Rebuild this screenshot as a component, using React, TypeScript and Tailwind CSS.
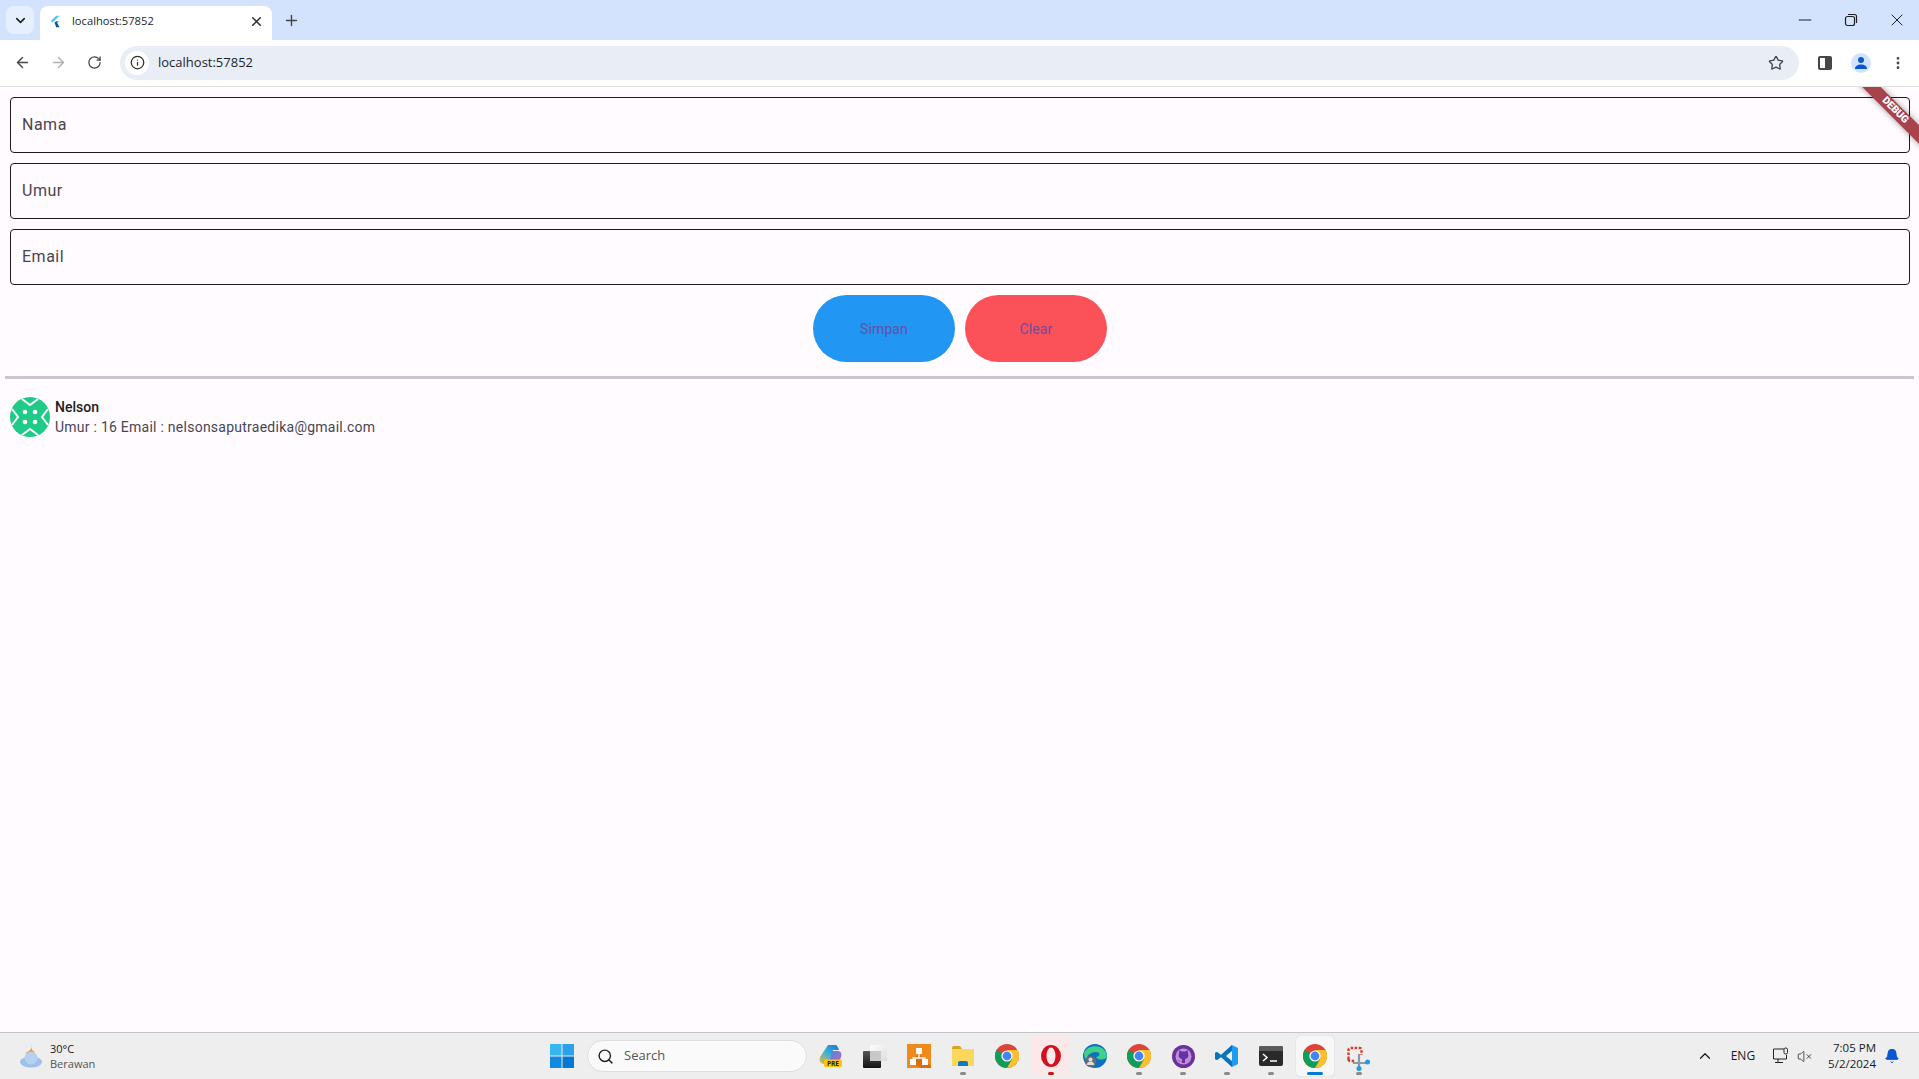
import { ArrowLeft, ArrowRight, ChevronDown, ChevronUp, Info, Minus, Plus, RotateCw, Search, Star, X, EllipsisVertical, Bell, VolumeX } from "lucide-react";

const font = "font-['Roboto',sans-serif]";
const uiFont = "font-['Open_Sans','Noto_Sans',sans-serif]";

function FlutterLogo() {
  return (
    <svg width="10" height="13" viewBox="0 0 12 14">
      <path d="M7.5 0H11.5L3 8.2 1 6.4z" fill="#47c5fb" />
      <path d="M7.5 6.4H11.5L7.5 10.4 5.5 8.4z" fill="#47c5fb" />
      <path d="M5.5 8.4 7.5 6.6 11.5 14H7.5z" fill="#00569e" />
    </svg>
  );
}

function ChromeIcon() {
  return (
    <svg width="24" height="24" viewBox="0 0 24 24">
      <circle cx="12" cy="12" r="12" fill="#db4437" />
      <path d="M12 12 1.6 6A12 12 0 0 0 12 24l5.2-9z" fill="#0f9d58" />
      <path d="M12 6h10.4A12 12 0 0 1 12 24l5.2-9z" fill="#fbc02d" />
      <circle cx="12" cy="12" r="5.6" fill="#fff" />
      <circle cx="12" cy="12" r="4.4" fill="#4285f4" />
    </svg>
  );
}

function Avatar() {
  return (
    <svg width="40" height="40" viewBox="0 0 40 40">
      <circle cx="20" cy="20" r="20" fill="#20cb88" />
      <g fill="none" stroke="#fffbff" strokeWidth="2">
        <path d="M12 2 20 8 28 2" />
        <path d="M12 38 20 32 28 38" />
        <path d="M2 12 8 20 2 28" />
        <path d="M38 12 32 20 38 28" />
      </g>
      <circle cx="15" cy="15" r="2.3" fill="#fffbff" />
      <circle cx="25" cy="15" r="2.3" fill="#fffbff" />
      <circle cx="15" cy="25" r="2.3" fill="#fffbff" />
      <circle cx="25" cy="25" r="2.3" fill="#fffbff" />
    </svg>
  );
}

function Field({ label }: { label: string }) {
  return (
    <div className="flex h-14 items-center rounded border border-[#1d1b20] pl-[11px]">
      <span className="text-base tracking-[0.5px] text-[#49454f]">{label}</span>
    </div>
  );
}

function TaskIcon({ children, dot, bg, color = "#8a8a8a", wide }: { children: React.ReactNode; dot?: boolean; bg?: string; color?: string; wide?: boolean }) {
  return (
    <div className="relative flex h-10 w-11 shrink-0 items-center justify-center">
      {bg && <span className={`absolute inset-x-[3px] inset-y-0 rounded ${bg}`} />}
      <span className="relative flex items-center justify-center">{children}</span>
      {dot && (
        <span className="absolute bottom-[1px] left-0 right-0 flex justify-center">
          <span className={`h-[3px] rounded-full ${wide ? "w-4" : "w-1.5"}`} style={{ backgroundColor: color }} />
        </span>
      )}
    </div>
  );
}

export default function App() {
  return (
    <div className={`flex h-screen w-full flex-col overflow-hidden bg-[#fffbff] ${font}`}>
      {/* Chrome tab strip */}
      <div className={`flex h-10 shrink-0 items-end bg-[#d3e3fd] ${uiFont}`}>
        <div className="mb-[6px] ml-[6px] flex h-7 w-7 items-center justify-center rounded-lg bg-[#e6effd]">
          <ChevronDown size={15} strokeWidth={2.5} className="text-[#1f1f1f]" />
        </div>
        <div className="ml-[6px] flex h-[34px] w-[232px] items-center rounded-t-lg bg-white pb-1 pl-[10px] pr-2">
          <FlutterLogo />
          <span className="ml-[12px] flex-1 text-[11.2px] text-[#1f1f1f]">localhost:57852</span>
          <X size={15} strokeWidth={2.5} className="text-[#303030]" />
        </div>
        <div className="mb-[6px] ml-[5px] flex h-7 w-7 items-center justify-center">
          <Plus size={17} strokeWidth={2} className="text-[#444746]" />
        </div>
        <div className="mb-[10px] ml-auto flex items-center gap-[26px] pr-[12px] text-[#1f1f1f]">
          <Minus size={20} strokeWidth={1.2} />
          <svg width="20" height="20" viewBox="0 0 20 20" fill="none" stroke="currentColor" strokeWidth="1.2">
            <rect x="4.5" y="6.5" width="9" height="9" rx="2" />
            <path d="M7 4.5h6.5a2 2 0 0 1 2 2V13" />
          </svg>
          <X size={20} strokeWidth={1.2} />
        </div>
      </div>

      {/* Toolbar */}
      <div className={`flex h-[47px] shrink-0 items-center rounded-t-lg border-b border-[#e3e3de] bg-white pb-[1px] ${uiFont}`}>
        <ArrowLeft size={17} strokeWidth={2} className="ml-[14px] text-[#474747]" />
        <ArrowRight size={17} strokeWidth={2} className="ml-[19px] text-[#b0b0b0]" />
        <RotateCw size={15} strokeWidth={2} className="ml-[20px] text-[#474747]" />
        <div className="ml-[18px] flex h-[34px] flex-1 items-center rounded-full bg-[#e9eef6] pl-[5px] pr-[15px]">
          <div className="flex h-6 w-6 items-center justify-center rounded-full bg-white">
            <Info size={15} strokeWidth={2} className="text-[#303030]" />
          </div>
          <span className="ml-[9px] flex-1 text-[13px] text-[#1f1f1f]">localhost:57852</span>
          <Star size={16} strokeWidth={2} className="text-[#474747]" />
        </div>
        <div className="ml-[19px] h-[14px] w-[14px] rounded-[2px] border-2 border-[#474747] bg-[linear-gradient(to_right,#fff_50%,#474747_50%)]" />
        <div className="ml-[19px] flex h-5 w-5 items-center justify-center overflow-hidden rounded-full bg-[#d3e3fd]">
          <svg width="14" height="14" viewBox="0 0 14 14" fill="#0b57d0">
            <circle cx="7" cy="4" r="3" />
            <path d="M1 13c0-3 2.5-4.5 6-4.5s6 1.5 6 4.5z" />
          </svg>
        </div>
        <EllipsisVertical size={16} strokeWidth={2.2} className="ml-[19px] mr-[13px] text-[#474747]" />
      </div>

      {/* Flutter page */}
      <main className="relative flex-1 overflow-hidden pt-[10px]">
        <div className="flex flex-col gap-[10px] pl-[10px] pr-[9px]">
          <Field label="Nama" />
          <Field label="Umur" />
          <Field label="Email" />
        </div>
        <div className="mt-[10px] flex justify-center gap-[10px] pl-[1px]">
          <button className="h-[67px] w-[142px] rounded-full bg-[#2196f3] text-sm tracking-[0.1px] text-[#6750a4]">Simpan</button>
          <button className="h-[67px] w-[142px] rounded-full bg-[#fa5258] text-sm tracking-[0.1px] text-[#6750a4]">Clear</button>
        </div>
        <div className="mx-[5px] mt-[14px] h-[3px] bg-[#cac4d0]" />
        <div className="mt-[18px] flex items-center gap-[5px] pl-[10px]">
          <Avatar />
          <div className="flex flex-col">
            <span className="text-sm font-medium leading-5 text-[#1d1b20]">Nelson</span>
            <span className="text-sm leading-5 tracking-[0.25px] text-[#49454f]">Umur : 16 Email : nelsonsaputraedika@gmail.com</span>
          </div>
        </div>

        {/* Debug banner */}
        <div className="absolute -right-[21px] top-[17px] flex h-[13px] w-[90px] rotate-45 items-center justify-center bg-[#a8434b] text-[10.2px] font-black leading-none text-white shadow-[0_0_6px_rgba(0,0,0,0.4)]">
          DEBUG
        </div>
      </main>

      {/* Windows taskbar */}
      <footer className={`relative flex h-[47px] shrink-0 items-center border-t border-[#c4c4c4] bg-[#eeeeee] ${uiFont}`}>
        <div className="flex w-[550px] items-center pl-[18px]">
          <svg width="26" height="26" viewBox="0 0 26 26">
            <path d="M13 1c1 4 0 7-6 9 3 2 8 2 10-1-3-1-4-4-4-8z" fill="#f59a23" />
            <ellipse cx="13" cy="19" rx="11" ry="5.5" fill="#9cc0ea" />
            <circle cx="13" cy="15" r="6.5" fill="#b5d0f0" />
          </svg>
          <div className="ml-[6px] flex flex-col text-[11px] leading-[15px]">
            <span className="text-[#1a1a1a]">30°C</span>
            <span className="text-[#555]">Berawan</span>
          </div>
        </div>
        <svg width="24" height="24" viewBox="0 0 24 24" className="shrink-0">
          <path d="M0 0h11.5v11.5H0z" fill="#38b6f1" />
          <path d="M12.5 0H24v11.5H12.5z" fill="#2aa2ea" />
          <path d="M0 12.5h11.5V24H0z" fill="#0f8ae0" />
          <path d="M12.5 12.5H24V24H12.5z" fill="#0578d4" />
        </svg>
        <div className="ml-[13px] flex h-8 w-[220px] shrink-0 items-center rounded-full border border-[#dedede] bg-[#fafafa] pl-[9px]">
          <Search size={17} strokeWidth={2} className="text-[#222]" />
          <span className="ml-[10px] text-[13px] text-[#555]">Search</span>
        </div>
        <div className="ml-[2px] flex items-center">
          <TaskIcon>
            <svg width="24" height="24" viewBox="0 0 24 24">
              <defs>
                <linearGradient id="copilotA" x1="0" y1="1" x2="1" y2="0">
                  <stop offset="0" stopColor="#f0b33a" />
                  <stop offset="0.5" stopColor="#3bb3d8" />
                  <stop offset="1" stopColor="#1a6fd6" />
                </linearGradient>
                <linearGradient id="copilotB" x1="0" y1="0" x2="1" y2="1">
                  <stop offset="0" stopColor="#3b8de0" />
                  <stop offset="1" stopColor="#d25fc0" />
                </linearGradient>
              </defs>
              <path d="M9 1h7c2 0 3 2 4 5H14L9 20H5C1 20 0 16 1 13z" fill="url(#copilotA)" />
              <path d="M13 7h6c3 0 4 3 3 6l-2 5c-1 2-2 3-4 3H9z" fill="url(#copilotB)" />
              <rect x="5" y="15.5" width="18" height="7.5" rx="1.5" fill="#ffc412" />
              <text x="14" y="21.5" textAnchor="middle" fontSize="6.5" fontWeight="700" fill="#222" fontFamily="Open Sans, sans-serif">PRE</text>
            </svg>
          </TaskIcon>
          <TaskIcon>
            <svg width="24" height="24" viewBox="0 0 24 24">
              <defs>
                <linearGradient id="stackTop" x1="0" y1="0" x2="1" y2="1">
                  <stop offset="0" stopColor="#ffffff" />
                  <stop offset="1" stopColor="#dcdcdc" />
                </linearGradient>
                <linearGradient id="stackBottom" x1="0" y1="0" x2="0" y2="1">
                  <stop offset="0" stopColor="#555" />
                  <stop offset="1" stopColor="#111" />
                </linearGradient>
              </defs>
              <rect x="7" y="1" width="17" height="16" fill="url(#stackTop)" />
              <rect x="0" y="7" width="18" height="17" rx="1" fill="url(#stackBottom)" />
              <rect x="7" y="7" width="11" height="10" fill="#c8c8c8" />
            </svg>
          </TaskIcon>
          <TaskIcon>
            <svg width="24" height="24" viewBox="0 0 24 24">
              <rect width="24" height="24" fill="#f08a1d" />
              <path d="M12 10 24 22V24H14L3 18z" fill="#d96f0c" />
              <path d="M12 10v4M6 16v-2h12v2" stroke="#fff" strokeWidth="1.3" fill="none" />
              <rect x="9" y="4" width="6" height="6" fill="#fff" />
              <rect x="3" y="15" width="6" height="6" fill="#fff" />
              <rect x="15" y="15" width="6" height="6" fill="#fff" />
            </svg>
          </TaskIcon>
          <TaskIcon dot>
            <svg width="24" height="22" viewBox="0 0 24 22">
              <path d="M1 3a2 2 0 0 1 2-2h6l2 3H1z" fill="#d9a520" />
              <rect x="1" y="4" width="22" height="17" fill="#fbd75b" />
              <path d="M7 21v-3a2 2 0 0 1 2-2h6a2 2 0 0 1 2 2v3z" fill="#1179c9" />
            </svg>
          </TaskIcon>
          <TaskIcon><ChromeIcon /></TaskIcon>
          <TaskIcon dot color="#c4161c" bg="bg-[#fbe9e9]">
            <svg width="24" height="24" viewBox="0 0 24 24">
              <ellipse cx="12" cy="12" rx="10" ry="11" fill="#d2101e" />
              <ellipse cx="12" cy="12" rx="4.5" ry="8.5" fill="#fbe9e9" />
            </svg>
          </TaskIcon>
          <TaskIcon>
            <svg width="24" height="24" viewBox="0 0 24 24">
              <circle cx="12" cy="12" r="12" fill="#0f6fc0" />
              <path d="M1 9C4 0 22-1 24 12c0 4-9 5-11 1 4 0 5-5 0-5C7 8 3 12 4 17 2 15 1 12 1 9z" fill="#3fd18a" />
              <circle cx="7.5" cy="17.5" r="5.5" fill="#6b6b6b" />
              <circle cx="7.5" cy="15.5" r="2" fill="#ddd" />
              <path d="M3.5 21c.5-2.5 2-3.5 4-3.5s3.5 1 4 3.5z" fill="#ddd" />
            </svg>
          </TaskIcon>
          <TaskIcon dot><ChromeIcon /></TaskIcon>
          <TaskIcon dot>
            <svg width="23" height="23" viewBox="0 0 23 23">
              <circle cx="11.5" cy="11.5" r="11.5" fill="#6e2e9e" />
              <circle cx="11.5" cy="11.5" r="8" fill="#b893d6" />
              <path d="M7.5 5 9.5 6.5h4L15.500 5 16 8.5c1 2.5 0 5-3 5.5v4h-3v-1.5C7.5 17 6.5 15.5 6 15l1.5.5c1 1 2 1 2.5.5v-2c-3-.5-4-3-3-5.500z" fill="#6e2e9e" />
            </svg>
          </TaskIcon>
          <TaskIcon dot>
            <svg width="24" height="24" viewBox="0 0 24 24">
              <path d="M17 1 23 4V20L17 23 6 13 2 16 0 15V9L2 8l4 3z" fill="#1f9cf0" />
              <path d="M17 1 6 11 2 8 0 9v6l2 1 4-3 11 10V17l-6-5 6-5z" fill="#0b74b8" />
              <path d="M17 7l-6 5 6 5z" fill="#eeeeee" />
            </svg>
          </TaskIcon>
          <TaskIcon dot>
            <svg width="24" height="20" viewBox="0 0 24 20">
              <rect width="24" height="20" rx="2" fill="#2a2a2a" />
              <path d="M0 2a2 2 0 0 1 2-2h20a2 2 0 0 1 2 2v3H0z" fill="#5a5a5a" />
              <path d="M4 8l4 3.5L4 15" stroke="#fff" strokeWidth="1.5" fill="none" />
              <path d="M11 15h7" stroke="#fff" strokeWidth="1.5" />
            </svg>
          </TaskIcon>
          <TaskIcon dot color="#0078d4" wide bg="bg-[#f7f7f7] shadow-[0_0_1px_rgba(0,0,0,0.25)]"><ChromeIcon /></TaskIcon>
          <TaskIcon dot>
            <svg width="24" height="26" viewBox="0 0 24 26" fill="none" className="mt-[5px]">
              <path d="M1.5 13V4a2 2 0 0 1 2-2h9a2 2 0 0 1 2 2v5M1.5 13a2 2 0 0 0 2 2h5" stroke="#d13b2a" strokeWidth="2.4" strokeDasharray="2.5 1.5" />
              <path d="M12 8v14M6 17h15" stroke="#8a99a8" strokeWidth="2.2" />
              <circle cx="20.5" cy="16" r="2.5" fill="#1f9be8" />
              <circle cx="12" cy="22.5" r="2.5" fill="#1f9be8" />
            </svg>
          </TaskIcon>
        </div>
        <div className="ml-auto flex items-center pr-[19px] text-[#1a1a1a]">
          <ChevronUp size={18} strokeWidth={1.6} />
          <span className="ml-[17px] text-[12px]">ENG</span>
          <svg width="18" height="18" viewBox="0 0 18 18" fill="none" stroke="#222" strokeWidth="1" className="ml-[17px]">
            <path d="M12 2H1.5v10h13V8M6 12v3M3 15.5h8" />
            <rect x="12" y="1" width="3.5" height="6" rx="1.5" />
          </svg>
          <VolumeX size={15} strokeWidth={1.2} className="ml-[7px]" />
          <div className="ml-[16px] flex flex-col items-end text-[11.5px] leading-[16px]">
            <span>7:05 PM</span>
            <span>5/2/2024</span>
          </div>
          <Bell size={16} fill="#0b57d0" strokeWidth={1.5} className="ml-[8px] text-[#0b57d0]" />
        </div>
      </footer>
    </div>
  );
}
